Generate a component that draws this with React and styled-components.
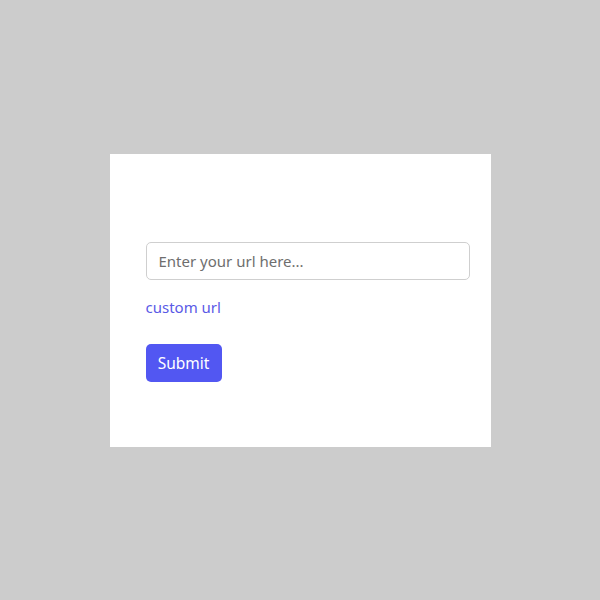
import styled, { createGlobalStyle } from "styled-components"

const Global = createGlobalStyle`
  html, body {
    margin: 0;
    padding: 0;
    background: #cccccc;
    font-family: "Noto Sans", "Open Sans", sans-serif;
  }
`

const Page = styled.div`
  width: 600px;
  height: 600px;
  display: flex;
  align-items: center;
  justify-content: center;
`

const Card = styled.form`
  box-sizing: border-box;
  width: 381px;
  height: 293px;
  background: #ffffff;
  padding: 88px 21px 0 36px;
  display: flex;
  flex-direction: column;
  align-items: flex-start;
`

const Input = styled.input`
  box-sizing: border-box;
  width: 324px;
  height: 38px;
  border: 1px solid #cfcfcf;
  border-radius: 5px;
  padding: 0 12px;
  font-family: inherit;
  font-size: 15px;
  color: #333;
  outline: none;
  &::placeholder {
    color: #6e6e6e;
  }
`

const LinkText = styled.a`
  margin-top: 16px;
  font-size: 15px;
  line-height: 22px;
  color: #5a5ae6;
  text-decoration: none;
  cursor: pointer;
`

const Button = styled.button`
  margin-top: 26px;
  width: 76px;
  height: 38px;
  border: none;
  border-radius: 5px;
  background: #5257f2;
  color: #ffffff;
  font-family: inherit;
  font-size: 15.5px;
  cursor: pointer;
`

const App = () => {
  return (
    <>
      <Global />
      <Page>
        <Card onSubmit={(e) => e.preventDefault()}>
          <Input placeholder="Enter your url here..." />
          <LinkText>custom url</LinkText>
          <Button type="submit">Submit</Button>
        </Card>
      </Page>
    </>
  )
}

export default App
